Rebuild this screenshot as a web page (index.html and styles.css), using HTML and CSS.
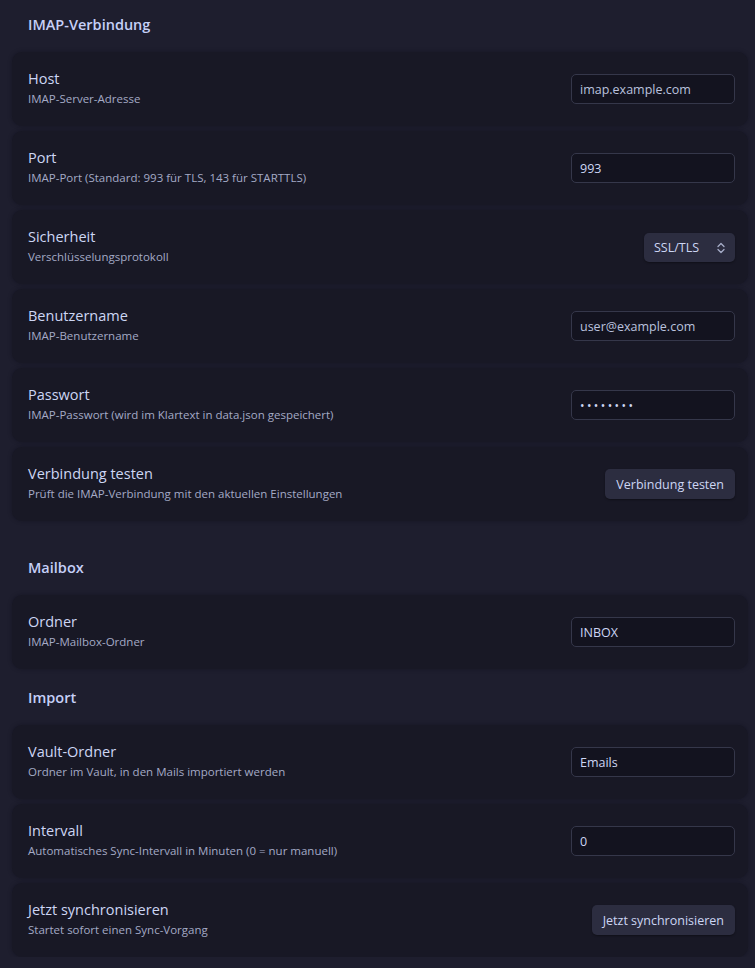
FILE: index.html
```html
<!DOCTYPE html>
<html lang="de">
<head>
    <meta charset="UTF-8">
    <meta name="viewport" content="width=device-width, initial-scale=1.0">
    <title>IMAP Einstellungen</title>
    <link rel="stylesheet" href="styles.css">
</head>
<body>
    <div class="settings">
        <div class="section section_first">
            <div class="heading">IMAP-Verbindung</div>

            <div class="item">
                <div class="info">
                    <div class="name">Host</div>
                    <div class="desc">IMAP-Server-Adresse</div>
                </div>
                <input type="text" class="field" placeholder="imap.example.com">
            </div>

            <div class="item">
                <div class="info">
                    <div class="name">Port</div>
                    <div class="desc">IMAP-Port (Standard: 993 für TLS, 143 für STARTTLS)</div>
                </div>
                <input type="text" class="field" value="993">
            </div>

            <div class="item">
                <div class="info">
                    <div class="name">Sicherheit</div>
                    <div class="desc">Verschlüsselungsprotokoll</div>
                </div>
                <div class="dropdown">
                    <select>
                        <option>SSL/TLS</option>
                        <option>STARTTLS</option>
                        <option>Keine</option>
                    </select>
                    <svg class="chevron" width="10" height="12" viewBox="0 0 10 12">
                        <path d="M2 4.5 L5 1.5 L8 4.5 M2 7.5 L5 10.5 L8 7.5" fill="none" stroke="#a6adc8" stroke-width="1.3" stroke-linecap="round" stroke-linejoin="round"/>
                    </svg>
                </div>
            </div>

            <div class="item">
                <div class="info">
                    <div class="name">Benutzername</div>
                    <div class="desc">IMAP-Benutzername</div>
                </div>
                <input type="text" class="field" placeholder="user@example.com">
            </div>

            <div class="item">
                <div class="info">
                    <div class="name">Passwort</div>
                    <div class="desc">IMAP-Passwort (wird im Klartext in data.json gespeichert)</div>
                </div>
                <input type="password" class="field" value="geheim12">
            </div>

            <div class="item">
                <div class="info">
                    <div class="name">Verbindung testen</div>
                    <div class="desc">Prüft die IMAP-Verbindung mit den aktuellen Einstellungen</div>
                </div>
                <button class="btn">Verbindung testen</button>
            </div>
        </div>

        <div class="section">
            <div class="heading">Mailbox</div>

            <div class="item">
                <div class="info">
                    <div class="name">Ordner</div>
                    <div class="desc">IMAP-Mailbox-Ordner</div>
                </div>
                <input type="text" class="field" value="INBOX">
            </div>
        </div>

        <div class="section">
            <div class="heading">Import</div>

            <div class="item">
                <div class="info">
                    <div class="name">Vault-Ordner</div>
                    <div class="desc">Ordner im Vault, in den Mails importiert werden</div>
                </div>
                <input type="text" class="field" value="Emails">
            </div>

            <div class="item">
                <div class="info">
                    <div class="name">Intervall</div>
                    <div class="desc">Automatisches Sync-Intervall in Minuten (0 = nur manuell)</div>
                </div>
                <input type="text" class="field" value="0">
            </div>

            <div class="item">
                <div class="info">
                    <div class="name">Jetzt synchronisieren</div>
                    <div class="desc">Startet sofort einen Sync-Vorgang</div>
                </div>
                <button class="btn">Jetzt synchronisieren</button>
            </div>
        </div>
    </div>
</body>
</html>
```

FILE: styles.css
```css
body {
    margin: 0;
    background: #1e1e2e;
    color: #cdd6f4;
    font-family: "Open Sans", "Noto Sans", sans-serif;
}

.settings {
    padding: 15px 7px 0 12px;
}

.section {
    display: flex;
    flex-direction: column;
    gap: 5px;
}

.section + .section {
    margin-top: 19px;
}

.section.section_first {
    margin-bottom: 37px;
}

.heading {
    height: 20px;
    line-height: 20px;
    padding-left: 16px;
    margin-bottom: 12px;
    font-size: 14.5px;
    font-weight: 600;
    color: #c6d0f8;
}

.item {
    display: flex;
    align-items: center;
    justify-content: space-between;
    height: 74px;
    box-sizing: border-box;
    padding: 0 13px 0 16px;
    background: #181825;
    border-radius: 10px;
    box-shadow: 0 0 4px rgba(10, 10, 20, 0.35);
}

.info {
    display: flex;
    flex-direction: column;
    gap: 2px;
    padding-bottom: 3px;
}

.name {
    font-size: 14.5px;
    line-height: 20px;
    color: #cdd6f4;
}

.desc {
    font-size: 11.5px;
    line-height: 16px;
    color: #a4aac6;
}

.field {
    width: 164px;
    height: 30px;
    box-sizing: border-box;
    padding: 0 8px;
    background: #13131f;
    border: 1px solid #35374a;
    border-radius: 5px;
    color: #cdd6f4;
    font-family: inherit;
    font-size: 12.5px;
    outline: none;
}

.field::placeholder {
    color: #bac2de;
}

.field[type="password"] {
    font-size: 12px;
    letter-spacing: 2.4px;
}

.dropdown {
    position: relative;
    width: 91px;
    height: 29px;
}

.dropdown select {
    appearance: none;
    width: 100%;
    height: 100%;
    padding: 0 0 0 10px;
    background: #2c2d40;
    border: none;
    border-radius: 5px;
    box-shadow: 0 1px 2px rgba(0, 0, 0, 0.35);
    color: #cdd6f4;
    font-family: inherit;
    font-size: 12.5px;
}

.chevron {
    position: absolute;
    right: 9px;
    top: 9px;
    pointer-events: none;
}

.btn {
    height: 30px;
    padding: 0 11px;
    background: #2c2d40;
    border: none;
    border-radius: 5px;
    box-shadow: 0 1px 2px rgba(0, 0, 0, 0.35);
    color: #cdd6f4;
    font-family: inherit;
    font-size: 12.5px;
}
```
